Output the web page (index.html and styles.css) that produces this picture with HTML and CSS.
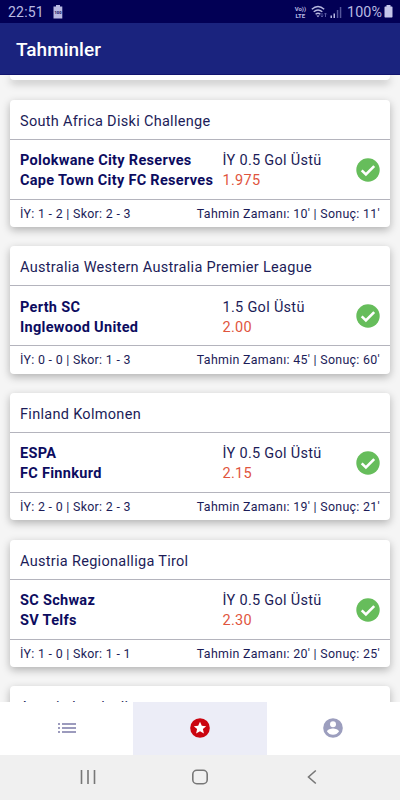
FILE: index.html
```html
<!DOCTYPE html>
<html lang="tr">
<head>
<meta charset="utf-8">
<title>Tahminler</title>
<link rel="stylesheet" href="styles.css">
</head>
<body>
<div class="phone">
  <div class="status">
    <span class="clock">22:51</span>
    <svg class="full-battery" width="10" height="14" viewBox="0 0 10 14"><path d="M3 0h4v1.500h2.300v12H.5v-12H3z" fill="#b9bae2"/><text x="5" y="9" text-anchor="middle" class="tiny">100</text></svg>
    <span class="volte"><span>Vo))</span><span>LTE</span></span>
    <svg class="wifi" width="17" height="14" viewBox="0 0 17 14" fill="none" stroke="#b9bae2" stroke-width="1.400"><path d="M.8 4.200Q7 -1.300 13.200 4.200M2.700 6.800Q7 3.200 11.300 6.800M4.600 9.200Q7 7.200 9.400 9.200"/><path d="M5.400 10.400h3.200L7 12.200z" fill="#b9bae2" stroke="none"/><path d="M11 8v4M9.800 10.700l1.200 1.300 1.200-1.300M14.500 12V8M13.300 9.300l1.200-1.300 1.200 1.300" stroke="#5557a0" stroke-width="1"/></svg>
    <svg class="signal" width="12" height="12" viewBox="0 0 12 12"><path d="M.5 9.500H2V12H.5zM3.500 7.500H5V12H3.500z" fill="#b9bae2"/><path d="M6.800 4H8.300V12H6.800zM9.800 1H11.300V12H9.800z" fill="#55569b"/></svg>
    <span class="percent">100%</span>
    <svg class="battery" width="9" height="13" viewBox="0 0 9 13"><path d="M2.500 0h4v1.500h1.300q.7 0 .7.700v9.600q0 .7-.7.700H1.200q-.7 0-.7-.7V2.200q0-.7.7-.7h1.300z" fill="#c5c6ea"/></svg>
  </div>
  <header class="appbar"><h1>Tahminler</h1></header>
  <main class="feed">
    <article class="card card-end"></article>
    <article class="card">
      <h2>South Africa Diski Challenge</h2>
      <div class="match"><div class="teams">Polokwane City Reserves<br>Cape Town City FC Reserves</div><div class="bet">İY 0.5 Gol Üstü<br><span class="odds">1.975</span></div><svg class="check" viewBox="0 0 24 24"><circle cx="12" cy="12" r="11.700"/><path d="M5.700 12.400l4.200 4.100 8.300-8.400"/></svg></div>
      <footer><span>İY: 1 - 2 | Skor: 2 - 3</span><span>Tahmin Zamanı: 10' | Sonuç: 11'</span></footer>
    </article>
    <article class="card">
      <h2>Australia Western Australia Premier League</h2>
      <div class="match"><div class="teams">Perth SC<br>Inglewood United</div><div class="bet">1.5 Gol Üstü<br><span class="odds">2.00</span></div><svg class="check" viewBox="0 0 24 24"><circle cx="12" cy="12" r="11.700"/><path d="M5.700 12.400l4.200 4.100 8.300-8.400"/></svg></div>
      <footer><span>İY: 0 - 0 | Skor: 1 - 3</span><span>Tahmin Zamanı: 45' | Sonuç: 60'</span></footer>
    </article>
    <article class="card">
      <h2>Finland Kolmonen</h2>
      <div class="match"><div class="teams">ESPA<br>FC Finnkurd</div><div class="bet">İY 0.5 Gol Üstü<br><span class="odds">2.15</span></div><svg class="check" viewBox="0 0 24 24"><circle cx="12" cy="12" r="11.700"/><path d="M5.700 12.400l4.200 4.100 8.300-8.400"/></svg></div>
      <footer><span>İY: 2 - 0 | Skor: 2 - 3</span><span>Tahmin Zamanı: 19' | Sonuç: 21'</span></footer>
    </article>
    <article class="card">
      <h2>Austria Regionalliga Tirol</h2>
      <div class="match"><div class="teams">SC Schwaz<br>SV Telfs</div><div class="bet">İY 0.5 Gol Üstü<br><span class="odds">2.30</span></div><svg class="check" viewBox="0 0 24 24"><circle cx="12" cy="12" r="11.700"/><path d="M5.700 12.400l4.200 4.100 8.300-8.400"/></svg></div>
      <footer><span>İY: 1 - 0 | Skor: 1 - 1</span><span>Tahmin Zamanı: 20' | Sonuç: 25'</span></footer>
    </article>
    <article class="card"><h2>Austria Landesliga</h2></article>
  </main>
  <nav class="tabs">
    <div class="tab"><svg width="18" height="12" viewBox="0 0 18 12" fill="#9c9bbd"><path d="M0 1h2v1.900H0zM4 1h14v1.900H4zM0 5h2v1.900H0zM4 5h14v1.900H4zM0 9h2v1.900H0zM4 9h14v1.900H4z"/></svg></div>
    <div class="tab active"><svg width="20" height="20" viewBox="0 0 20 20"><circle cx="10" cy="10" r="9.800" fill="#cb0510"/><path d="M10 3.700l1.800 4.100 4.400.4-3.300 2.900 1 4.400-3.900-2.300-3.900 2.300 1-4.400-3.300-2.900 4.400-.4z" fill="#fff"/></svg></div>
    <div class="tab"><svg width="20" height="20" viewBox="0 0 20 20"><circle cx="10" cy="10" r="9.800" fill="#9c9ebe"/><circle cx="10" cy="6.200" r="3" fill="#fff"/><path d="M4 13.500c0-2 4-3.100 6-3.100s6 1.100 6 3.100c-1.300 2-3.500 3.300-6 3.300s-4.700-1.300-6-3.300z" fill="#fff"/></svg></div>
  </nav>
  <div class="system">
    <svg width="16" height="16" viewBox="0 0 16 16"><path d="M1.500 1v14M8 1v14M14.500 1v14"/></svg>
    <svg width="16" height="16" viewBox="0 0 16 16"><rect x=".8" y="1.300" width="14.400" height="13.400" rx="4"/></svg>
    <svg width="16" height="16" viewBox="0 0 16 16"><path d="M11.800 1.500L4.500 8l7.300 6.500"/></svg>
  </div>
</div>
</body>
</html>
```
FILE: styles.css
```css
* { box-sizing: border-box; }
body { margin: 0; font-family: Roboto, "Liberation Sans", sans-serif; color: #1c1c58; }
svg { display: block; flex: none; }
.phone { width: 400px; height: 800px; display: flex; flex-direction: column; overflow: hidden; background: #f5f5f5; }
.status { flex: none; height: 23px; background: #020055; color: #b9bae2; display: flex; align-items: center; padding: 0 7px 0 8px; }
.clock { font-size: 14px; letter-spacing: 0.2px; width: 45px; }
.tiny { font-size: 4px; font-weight: 700; fill: #020055; }
.volte { margin-left: auto; margin-right: 5px; font-size: 6px; line-height: 7px; font-weight: 700; display: flex; flex-direction: column; align-items: center; }
.wifi { margin-right: 2px; }
.signal { margin-right: 5px; margin-top: 1px; }
.percent { font-size: 14.300px; margin-right: 2px; letter-spacing: 0.1px; }
.appbar { flex: none; height: 52px; background: #1a237e; display: flex; align-items: center; padding: 2px 0 0 16px; border-bottom: 1px solid #11146e; }
.appbar h1 { margin: 0; font-size: 19px; line-height: 24px; font-weight: 500; color: #fff; }
.feed { flex: 1; min-height: 0; overflow: hidden; padding: 0 10px; }
.card { height: 127.330px; margin-bottom: 19.330px; background: #fff; border-radius: 4px; box-shadow: 0 3px 9px rgba(0, 0, 0, 0.28); }
.card-end { height: 5.300px; border-radius: 0 0 4px 4px; }
.card h2 { margin: 0; height: 40px; padding: 0 10px; border-bottom: 1px solid #b4b4bd; font-size: 14.500px; line-height: 43.400px; font-weight: 400; letter-spacing: 0.3px; }
.match { height: 60px; border-bottom: 1px solid #b4b4bd; padding: 1px 10px 0; display: flex; align-items: center; font-size: 14.500px; line-height: 20px; white-space: nowrap; letter-spacing: 0.3px; }
.teams { width: 202.500px; padding-top: 3px; font-weight: 700; color: #0c0c60; }
.bet { padding-top: 3px; }
.odds { color: #df553e; }
.check { width: 24px; height: 24px; margin-left: auto; }
.check circle { fill: #66bd5b; }
.check path { fill: none; stroke: #fff; stroke-width: 2.600; }
.card footer { display: flex; justify-content: space-between; padding: 0 10px; font-size: 12.400px; line-height: 28.400px; letter-spacing: 0.3px; }
.tabs { flex: none; height: 53.500px; display: grid; grid-template-columns: repeat(3, 1fr); background: #fff; }
.tab { display: flex; align-items: center; justify-content: center; padding-bottom: 1px; }
.tab.active { background: #ecedf7; }
.system { flex: none; height: 45px; background: #f0f0f0; display: flex; justify-content: center; gap: 96px; align-items: center; padding-bottom: 2px; }
.system svg { fill: none; stroke: #777; stroke-width: 1.600; }
```
